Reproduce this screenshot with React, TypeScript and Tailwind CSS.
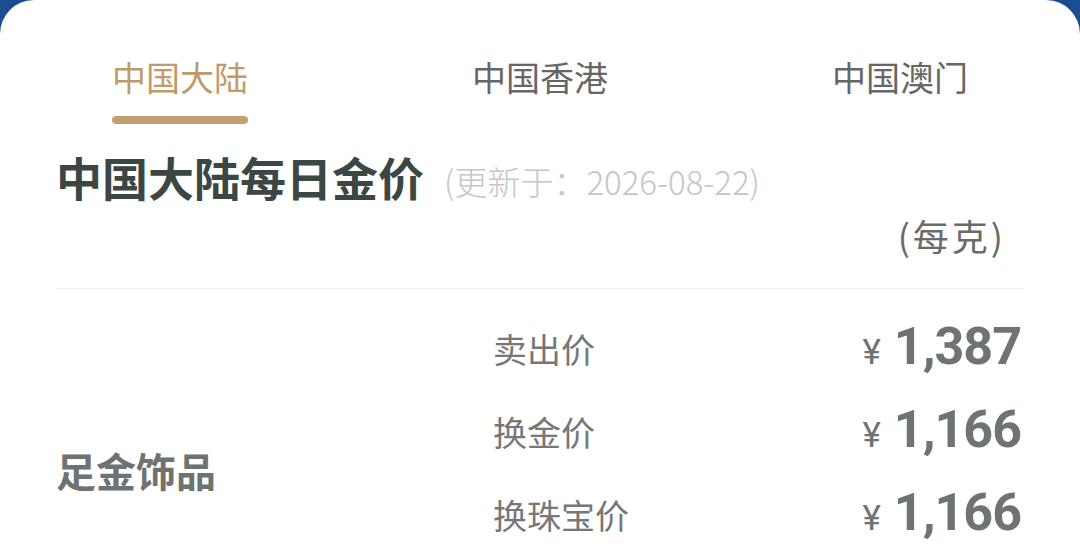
import React from "react";

const tabs = ["中国大陆", "中国香港", "中国澳门"];
const rows = [
  { label: "卖出价", price: "1,387" },
  { label: "换金价", price: "1,166" },
  { label: "换珠宝价", price: "1,166" },
];

export default function App() {
  return (
    <div
      className="w-[1080px] h-[558px] overflow-hidden bg-[#1a4d92]"
      style={{ fontFamily: '"Noto Sans CJK SC", "Noto Sans", sans-serif' }}
    >
      <div className="bg-white rounded-t-[34px] min-h-[700px]">
        <div className="grid grid-cols-3 pt-[51px]">
          {tabs.map((t, i) => (
            <div key={t} className="flex flex-col items-center">
              <div
                className={
                  "text-[34px] leading-[51px] " +
                  (i === 0 ? "text-[#c09a6b]" : "text-[#666666]")
                }
              >
                {t}
              </div>
              <div
                className={
                  "mt-[14px] h-[8px] w-[136px] rounded-full " +
                  (i === 0 ? "bg-[#c39e70]" : "bg-transparent")
                }
              />
            </div>
          ))}
        </div>

        <div className="px-[56px]">
          <div className="mt-[22px] flex items-end">
            <div className="text-[46px] leading-[60px] font-bold text-[#3c4744]">
              中国大陆每日金价
            </div>
            <div className="ml-[20px] mb-[3px] text-[33px] leading-[44px] font-light text-[#c6c6c6]">
              (更新于：2026-08-22)
            </div>
          </div>
          <div className="flex justify-end pr-[18px] mt-[5px] text-[36px] leading-[48px] tracking-[3px] text-[#6a6a6a]">
            (每克)
          </div>
          <div className="mt-[29px] h-px bg-[#efefef]" />

          <div className="flex pt-[18px]">
            <div className="w-[437px] flex items-center pt-[77px]">
              <div className="text-[40px] font-bold text-[#6e7271] leading-[52px]">
                足金饰品
              </div>
            </div>
            <div className="flex-1 flex flex-col">
              {rows.map((r) => (
                <div key={r.label} className="h-[83px] flex items-center justify-between">
                  <div className="text-[34px] text-[#777777] leading-[48px]">{r.label}</div>
                  <div
                    className="flex items-baseline text-[#6e7373] pr-[3px]"
                    style={{ fontFamily: 'Roboto, "Noto Sans", sans-serif' }}
                  >
                    <span className="text-[35px] mr-[13px]">¥</span>
                    <span className="text-[52px] font-bold leading-[60px] tracking-[-1px]">
                      {r.price}
                    </span>
                  </div>
                </div>
              ))}
            </div>
          </div>
        </div>
      </div>
    </div>
  );
}
